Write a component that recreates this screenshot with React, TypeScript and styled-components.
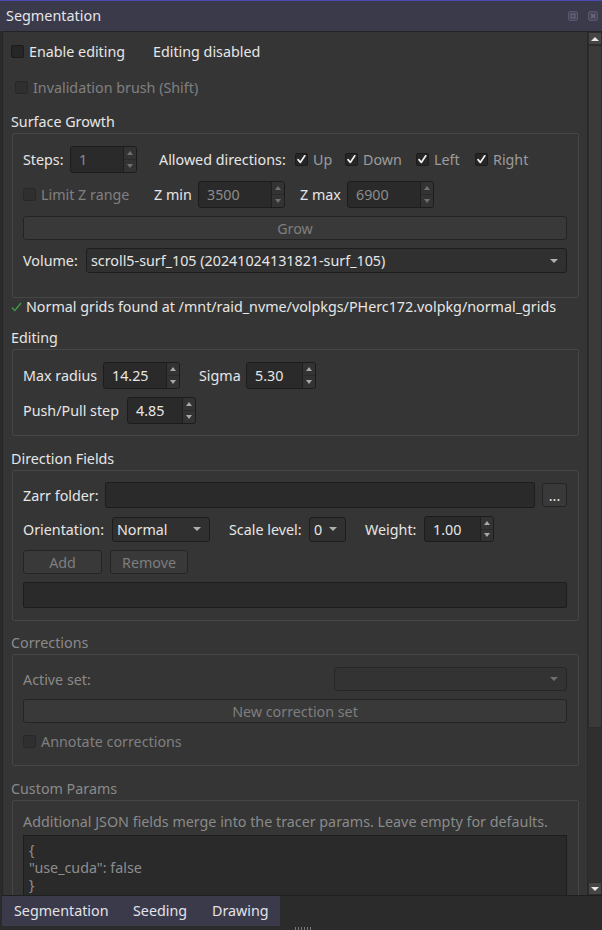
import React from 'react';
import styled, { createGlobalStyle } from 'styled-components';

const FONT = `"Noto Sans", "Open Sans", "DejaVu Sans", sans-serif`;

const GlobalStyle = createGlobalStyle`
  html, body { margin: 0; padding: 0; background: #2b2b2b; }
  body { font-family: ${FONT}; font-size: 14.3px; color: #e6e6e6; }
  * { box-sizing: border-box; }
`;

const TEXT = '#e6e6e6';
const DIM = '#8a8a8a';

const Window = styled.div`
  width: 602px;
  height: 930px;
  display: flex;
  flex-direction: column;
  background: #2b2b2b;
  overflow: hidden;
`;

const TitleBar = styled.div`
  height: 31px;
  flex-shrink: 0;
  border-top: 1px solid #4b4bb4;
  background: #3b3a4b;
  display: flex;
  align-items: center;
  padding: 0 4px 1px 6px;
`;

const TitleText = styled.span`
  color: #e4e4e8;
  font-size: 14.4px;
`;

const TitleButtons = styled.div`
  margin-left: auto;
  display: flex;
  gap: 10px;
  align-items: center;
`;

const TitleButton = styled.div`
  width: 10px;
  height: 10px;
  display: flex;
`;

const Body = styled.div`
  height: 865px;
  flex-shrink: 0;
  display: flex;
  margin-left: 2px;
  border-top: 1px solid #232323;
  border-bottom: 1px solid #1f1f1f;
  border-left: 1px solid #262626;
  background: #353535;
`;

const Content = styled.div`
  flex: 1;
  min-width: 0;
  overflow: hidden;
  display: flex;
  flex-direction: column;
  padding: 5px 8px 0 8px;
`;

const TopRow = styled.div<{ $mt?: number; $ml?: number }>`
  height: 28px;
  flex-shrink: 0;
  display: flex;
  align-items: center;
  margin-top: ${p => p.$mt ?? 0}px;
  margin-left: ${p => p.$ml ?? 0}px;
`;

const StatusRow = styled.div`
  height: 17px;
  flex-shrink: 0;
  display: flex;
  align-items: center;
  gap: 4px;
  white-space: nowrap;
`;

const SectionTitle = styled.div<{ $mt: number; $disabled?: boolean }>`
  height: 22px;
  line-height: 22px;
  flex-shrink: 0;
  margin-top: ${p => p.$mt}px;
  color: ${p => (p.$disabled ? DIM : TEXT)};
`;

const Group = styled.div<{ $pt: number; $pb: number; $gap?: number }>`
  flex-shrink: 0;
  margin-left: 1px;
  border: 1px solid #464646;
  border-radius: 2px;
  padding: ${p => p.$pt}px 11px ${p => p.$pb}px 10px;
  display: flex;
  flex-direction: column;
  gap: ${p => p.$gap ?? 8}px;
`;

const Row = styled.div<{ $h: number }>`
  height: ${p => p.$h}px;
  flex-shrink: 0;
  display: flex;
  align-items: center;
`;

const Label = styled.span<{ $w?: number; $ml?: number; $disabled?: boolean; $grow?: boolean }>`
  ${p => (p.$w ? `width: ${p.$w}px;` : '')}
  ${p => (p.$grow ? 'flex: 1;' : 'flex-shrink: 0;')}
  margin-left: ${p => p.$ml ?? 0}px;
  color: ${p => (p.$disabled ? DIM : TEXT)};
  white-space: nowrap;
`;

const CheckItem = styled.label<{ $w?: number; $disabled?: boolean; $muted?: boolean }>`
  ${p => (p.$w ? `width: ${p.$w}px;` : '')}
  flex-shrink: 0;
  display: flex;
  align-items: center;
  gap: 5px;
  white-space: nowrap;
  color: ${p => (p.$disabled ? '#808080' : p.$muted ? '#9c9c9c' : TEXT)};
`;

const Box = styled.span<{ $disabled?: boolean }>`
  width: 13px;
  height: 13px;
  flex-shrink: 0;
  border-radius: 2px;
  border: 1px solid ${p => (p.$disabled ? '#282828' : '#1b1b1b')};
  background: ${p => (p.$disabled ? '#2f2f2f' : '#262626')};
  display: flex;
  align-items: center;
  justify-content: center;
`;

const CheckBox = ({ checked, disabled }: { checked?: boolean; disabled?: boolean }) => (
  <Box $disabled={disabled}>
    {checked && (
      <svg width="11" height="11" viewBox="0 0 11 11">
        <path d="M2 5.6 L4.3 8.4 L8.8 1.8" fill="none" stroke="#f2f2f2" strokeWidth="1.7" strokeLinecap="round" strokeLinejoin="round" />
      </svg>
    )}
  </Box>
);

const Triangle = styled.span<{ $up?: boolean; $color?: string; $size?: number }>`
  width: 0;
  height: 0;
  border-left: ${p => p.$size ?? 3.5}px solid transparent;
  border-right: ${p => p.$size ?? 3.5}px solid transparent;
  ${p =>
    p.$up
      ? `border-bottom: 4px solid ${p.$color ?? '#b4b4b4'};`
      : `border-top: 4px solid ${p.$color ?? '#b4b4b4'};`}
`;

const SpinFrame = styled.div<{ $w: number; $h: number; $ml?: number }>`
  width: ${p => p.$w}px;
  height: ${p => p.$h}px;
  margin-left: ${p => p.$ml ?? 0}px;
  flex-shrink: 0;
  display: flex;
  border: 1px solid #1c1c1c;
  border-radius: 3px;
  background: #2a2a2a;
  overflow: hidden;
`;

const SpinValue = styled.span<{ $disabled?: boolean }>`
  flex: 1;
  display: flex;
  align-items: center;
  padding-left: 8px;
  color: ${p => (p.$disabled ? '#8c8c8c' : TEXT)};
`;

const SpinButtons = styled.div`
  width: 13px;
  display: flex;
  flex-direction: column;
  border-left: 1px solid #1f1f1f;
  background: #333333;
`;

const SpinButton = styled.div`
  flex: 1;
  display: flex;
  align-items: center;
  justify-content: center;
  & + & {
    border-top: 1px solid #2a2a2a;
  }
`;

const SpinBox = ({ w, h = 27, value, disabled, ml }: { w: number; h?: number; value: string; disabled?: boolean; ml?: number }) => (
  <SpinFrame $w={w} $h={h} $ml={ml}>
    <SpinValue $disabled={disabled}>{value}</SpinValue>
    <SpinButtons>
      <SpinButton><Triangle $up $size={3.5} $color={disabled ? '#707070' : '#a8a8a8'} /></SpinButton>
      <SpinButton><Triangle $size={3.5} $color={disabled ? '#707070' : '#a8a8a8'} /></SpinButton>
    </SpinButtons>
  </SpinFrame>
);

const ComboFrame = styled.div<{ $w?: number; $h: number; $ml?: number; $disabled?: boolean }>`
  ${p => (p.$w ? `width: ${p.$w}px; flex-shrink: 0;` : 'flex: 1; min-width: 0;')}
  height: ${p => p.$h}px;
  margin-left: ${p => p.$ml ?? 0}px;
  display: flex;
  align-items: center;
  padding: 0 8px 0 4px;
  border: 1px solid ${p => (p.$disabled ? '#262626' : '#1d1d1d')};
  border-radius: 3px;
  background: ${p => (p.$disabled ? '#333333' : '#303030')};
  color: ${TEXT};
`;

const ComboText = styled.span`
  flex: 1;
  white-space: nowrap;
  overflow: hidden;
`;

const Combo = ({ w, h = 25, text, disabled, ml }: { w?: number; h?: number; text?: string; disabled?: boolean; ml?: number }) => (
  <ComboFrame $w={w} $h={h} $ml={ml} $disabled={disabled}>
    <ComboText>{text}</ComboText>
    <Triangle $size={4} $color={disabled ? '#6e6e6e' : '#b0b0b0'} />
  </ComboFrame>
);

const Button = styled.div<{ $w?: number; $h?: number; $ml?: number; $disabled?: boolean }>`
  ${p => (p.$w ? `width: ${p.$w}px; flex-shrink: 0;` : 'align-self: stretch;')}
  height: ${p => p.$h ?? 24}px;
  margin-left: ${p => p.$ml ?? 0}px;
  flex-shrink: 0;
  display: flex;
  align-items: center;
  justify-content: center;
  border: 1px solid #242424;
  border-radius: 3px;
  background: #393939;
  color: ${p => (p.$disabled ? '#7e7e7e' : TEXT)};
  white-space: nowrap;
`;

const LineEdit = styled.div<{ $h: number; $grow?: boolean }>`
  ${p => (p.$grow ? 'flex: 1; min-width: 0;' : 'align-self: stretch; flex-shrink: 0;')}
  height: ${p => p.$h}px;
  border: 1px solid #1d1d1d;
  border-radius: 2px;
  background: #2a2a2a;
`;

const TextEdit = styled.div`
  flex-shrink: 0;
  height: 120px;
  border: 1px solid #1d1d1d;
  background: #2a2a2a;
  padding: 5px 5px;
  line-height: 17.5px;
  color: #8e8e8e;
  white-space: pre;
`;

const ScrollBar = styled.div`
  width: 15px;
  flex-shrink: 0;
  display: flex;
  flex-direction: column;
  border-left: 1px solid #282828;
  background: #2f2f2f;
`;

const ScrollButton = styled.div`
  height: 13px;
  flex-shrink: 0;
  display: flex;
  align-items: center;
  justify-content: center;
  background: #454545;
  border: 1px solid #2c2c2c;
`;

const ScrollHandle = styled.div`
  height: 683px;
  flex-shrink: 0;
  background: #3a3a3a;
  border: 1px solid #2b2b2b;
`;

const ScrollTrough = styled.div`
  flex: 1;
`;

const BottomArea = styled.div`
  flex: 1;
  display: flex;
  flex-direction: column;
  background: #2b2b2b;
`;

const TabStrip = styled.div`
  height: 30px;
  width: 278px;
  margin-left: 2px;
  display: flex;
  background: #3b3a4b;
`;

const Tab = styled.div<{ $w: number }>`
  width: ${p => p.$w}px;
  display: flex;
  align-items: center;
  padding-left: 12px;
  padding-bottom: 1px;
  color: #e2e2e8;
  white-space: nowrap;
`;

const Grip = styled.div`
  width: 18px;
  height: 3px;
  margin: 1px 0 0 295px;
  background: repeating-linear-gradient(90deg, #7a7a7a 0 1px, transparent 1px 3px);
`;

export default function App() {
  return (
    <>
      <GlobalStyle />
      <Window>
        <TitleBar>
          <TitleText>Segmentation</TitleText>
          <TitleButtons>
            <TitleButton>
              <svg width="10" height="10" viewBox="0 0 10 10">
                <rect x="0.5" y="0.5" width="9" height="9" rx="1.5" fill="#47465a" stroke="#58576c" />
                <rect x="3" y="3" width="4" height="4" fill="none" stroke="#6a697e" />
              </svg>
            </TitleButton>
            <TitleButton>
              <svg width="10" height="10" viewBox="0 0 10 10">
                <rect x="0.5" y="0.5" width="9" height="9" rx="1.5" fill="#47465a" stroke="#58576c" />
                <path d="M3 3 L7 7 M7 3 L3 7" stroke="#6e6d82" strokeWidth="1.2" />
              </svg>
            </TitleButton>
          </TitleButtons>
        </TitleBar>

        <Body>
          <Content>
            <TopRow>
              <CheckItem $w={142}>
                <CheckBox />
                Enable editing
              </CheckItem>
              <Label>Editing disabled</Label>
            </TopRow>
            <TopRow $mt={8} $ml={4}>
              <CheckItem $disabled>
                <CheckBox disabled />
                Invalidation brush (Shift)
              </CheckItem>
            </TopRow>

            <SectionTitle $mt={10}>Surface Growth</SectionTitle>
            <Group $pt={12} $pb={24}>
              <Row $h={27}>
                <Label $w={47}>Steps:</Label>
                <SpinBox w={67} value="1" disabled />
                <Label $w={136} $ml={22}>Allowed directions:</Label>
                <CheckItem $w={50} $muted><CheckBox checked />Up</CheckItem>
                <CheckItem $w={71} $muted><CheckBox checked />Down</CheckItem>
                <CheckItem $w={59} $muted><CheckBox checked />Left</CheckItem>
                <CheckItem $muted><CheckBox checked />Right</CheckItem>
              </Row>
              <Row $h={27}>
                <CheckItem $w={131} $disabled><CheckBox disabled />Limit Z range</CheckItem>
                <Label $w={44}>Z min</Label>
                <SpinBox w={87} value="3500" disabled />
                <Label $w={47} $ml={15}>Z max</Label>
                <SpinBox w={87} value="6900" disabled />
              </Row>
              <Button $disabled>Grow</Button>
              <Row $h={25}>
                <Label $w={63}>Volume:</Label>
                <Combo text="scroll5-surf_105 (20241024131821-surf_105)" />
              </Row>
            </Group>

            <StatusRow>
              <svg width="11" height="10" viewBox="0 0 11 10">
                <path d="M1 5.5 L3.8 8.6 L10 1" fill="none" stroke="#3fa34d" strokeWidth="1.2" />
              </svg>
              Normal grids found at /mnt/raid_nvme/volpkgs/PHerc172.volpkg/normal_grids
            </StatusRow>

            <SectionTitle $mt={12}>Editing</SectionTitle>
            <Group $pt={12} $pb={11}>
              <Row $h={27}>
                <Label $w={80}>Max radius</Label>
                <SpinBox w={77} value="14.25" />
                <Label $w={47} $ml={19}>Sigma</Label>
                <SpinBox w={70} value="5.30" />
              </Row>
              <Row $h={27}>
                <Label $w={104}>Push/Pull step</Label>
                <SpinBox w={69} value="4.85" />
              </Row>
            </Group>

            <SectionTitle $mt={12}>Direction Fields</SectionTitle>
            <Group $pt={11} $pb={12}>
              <Row $h={26}>
                <Label $w={82}>Zarr folder:</Label>
                <LineEdit $h={26} $grow />
                <Button $w={25} $ml={7}>...</Button>
              </Row>
              <Row $h={26}>
                <Label $w={89}>Orientation:</Label>
                <Combo w={98} text="Normal" />
                <Label $w={80} $ml={19}>Scale level:</Label>
                <Combo w={37} text="0" />
                <Label $w={59} $ml={19}>Weight:</Label>
                <SpinBox w={70} h={26} value="1.00" />
              </Row>
              <Row $h={24}>
                <Button $w={79} $disabled>Add</Button>
                <Button $w={78} $ml={8} $disabled>Remove</Button>
              </Row>
              <LineEdit $h={26} />
            </Group>

            <SectionTitle $mt={11} $disabled>Corrections</SectionTitle>
            <Group $pt={12} $pb={14}>
              <Row $h={24}>
                <Label $grow $disabled>Active set:</Label>
                <Combo w={233} h={24} disabled />
              </Row>
              <Button $disabled>New correction set</Button>
              <Row $h={20}>
                <CheckItem $disabled><CheckBox disabled />Annotate corrections</CheckItem>
              </Row>
            </Group>

            <SectionTitle $mt={12} $disabled>Custom Params</SectionTitle>
            <Group $pt={10} $pb={10} $gap={4}>
              <Row $h={20}>
                <Label $disabled>Additional JSON fields merge into the tracer params. Leave empty for defaults.</Label>
              </Row>
              <TextEdit>{'{\n"use_cuda": false\n}'}</TextEdit>
            </Group>
          </Content>

          <ScrollBar>
            <ScrollButton><Triangle $up $size={4} $color="#e8e8e8" /></ScrollButton>
            <ScrollHandle />
            <ScrollTrough />
            <ScrollButton><Triangle $size={4} $color="#e8e8e8" /></ScrollButton>
          </ScrollBar>
        </Body>

        <BottomArea>
          <TabStrip>
            <Tab $w={119}>Segmentation</Tab>
            <Tab $w={79}>Seeding</Tab>
            <Tab $w={80}>Drawing</Tab>
          </TabStrip>
          <Grip />
        </BottomArea>
      </Window>
    </>
  );
}
